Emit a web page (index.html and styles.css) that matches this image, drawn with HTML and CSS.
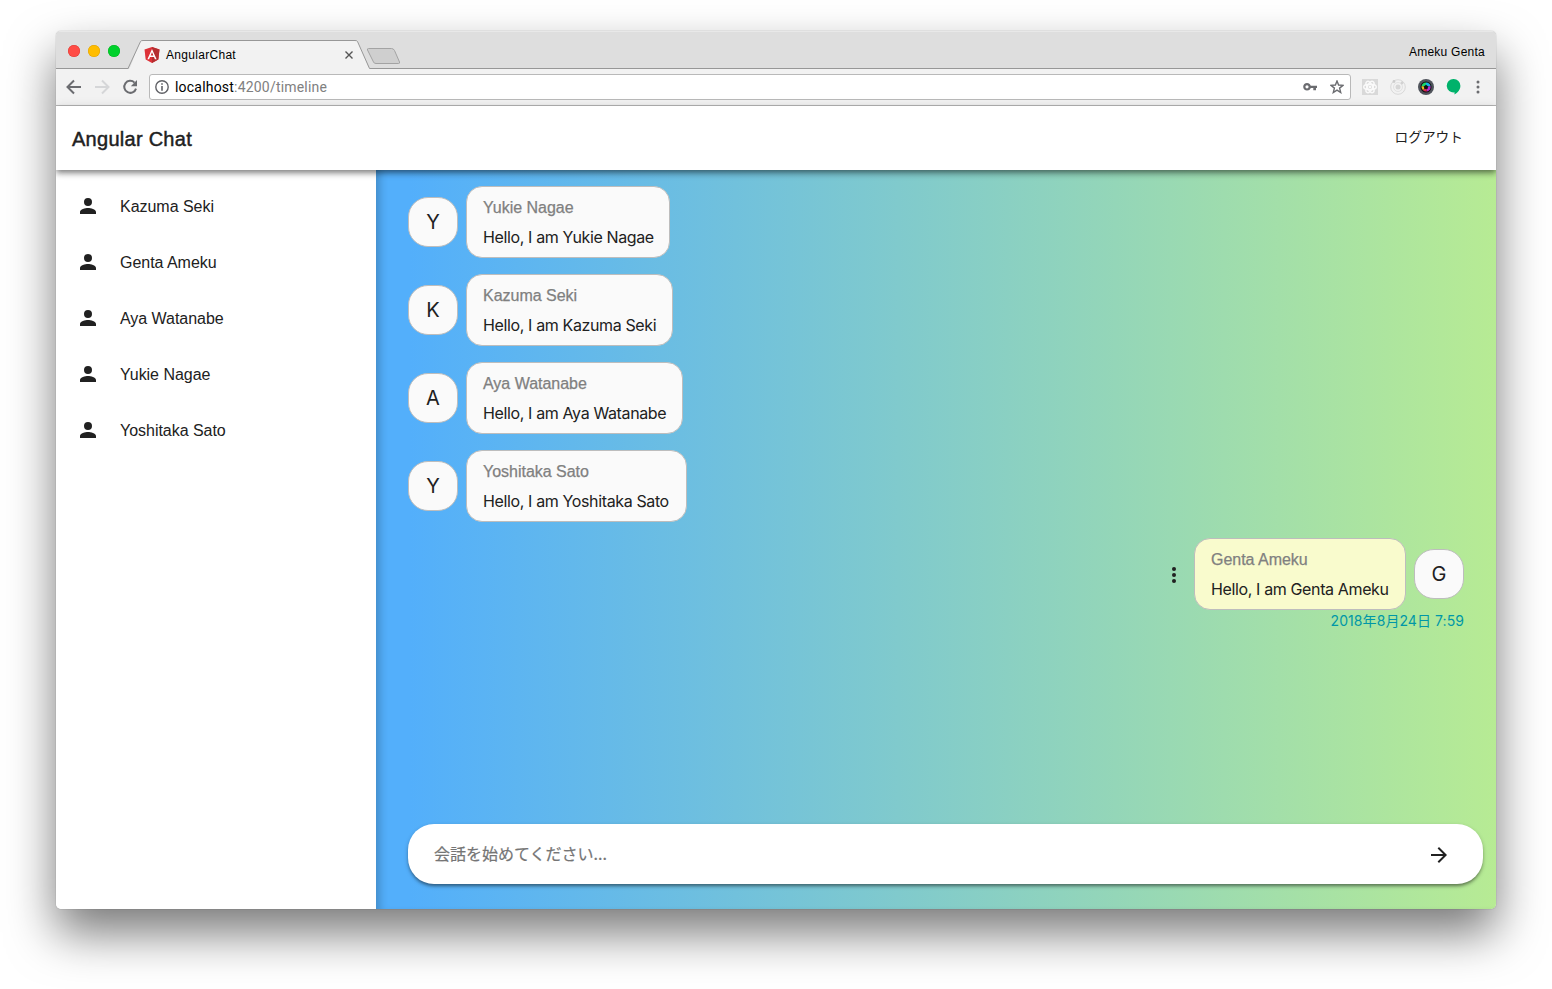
FILE: index.html
```html
<!DOCTYPE html>
<html lang="ja">
<head>
<meta charset="utf-8">
<title>AngularChat</title>
<link rel="stylesheet" href="styles.css">
</head>
<body>
<div class="window">
  <div class="tabstrip">
    <svg class="tabshape" width="360" height="38" viewBox="0 0 360 38">
      <path d="M72 38.5 L72 37.5 C74 37.5 74 36 75 34 L83.500 12 Q84.500 9.500 87 9.500 H299 Q301.500 9.500 302.500 12 L312 35 Q313 37.500 315 37.500 V38.500Z" fill="#f2f2f2"/>
      <path d="M0 37.500 H72 L84.500 10.500 Q85 9.500 87 9.500 H299 Q301 9.500 301.500 10.500 L313.500 37.500 H360" fill="none" stroke="#979797"/>
      <path d="M312.500 17.500 H335.500 Q337.500 17.500 338.500 19.500 L343.500 31 Q344 32.500 342.500 32.500 H320 Q318 32.500 317.500 31 L311.500 19 Q311 17.500 312.500 17.500Z" fill="#cfcfcf" stroke="#a3a3a3"/>
    </svg>
    <div class="lights"><i class="red"></i><i class="yellow"></i><i class="green"></i></div>
    <svg class="favicon" width="16" height="16" viewBox="0 0 16 16"><path d="M8 0 15.500 2.600 14.300 12.500 8 16 1.700 12.500.5 2.600Z" fill="#dd3138"/><path d="M8 0 15.500 2.600 14.300 12.500 8 16Z" fill="#b52e31"/><path d="M8 1.900 3.400 12.200H5.100L6 9.900H10L10.900 12.200H12.600ZM8 5.200 9.350 8.500H6.650Z" fill="#fff" fill-rule="evenodd"/></svg>
    <span class="tabtitle">AngularChat</span>
    <svg class="close" width="8" height="8" viewBox="0 0 8 8"><path d="M.5.5 7.500 7.500M7.500.5.5 7.500" stroke="#555" stroke-width="1.400"/></svg>
    <span class="profile">Ameku Genta</span>
  </div>
  <div class="toolbar">
    <svg class="nav" width="84" height="36" viewBox="0 0 84 36" fill="none" stroke-width="2">
      <path d="M25 18H12M18 11.500 11.500 18 18 24.500" stroke="#6b6c70"/>
      <path d="M39 18H52M46 11.500 52.500 18 46 24.500" stroke="#d5d6d8"/>
      <path d="M78.500 13.600A6 6 0 1 0 80 19.600" stroke="#6b6c70"/><path d="M81 11V17.200H74.800Z" fill="#6b6c70"/>
    </svg>
    <div class="address">
      <svg width="14" height="14" viewBox="0 0 14 14"><circle cx="7" cy="7" r="6.200" fill="none" stroke="#606166" stroke-width="1.400"/><path d="M6.200 3.200h1.600v1.600H6.200zM6.200 6h1.600v4.800H6.200z" fill="#606166"/></svg>
      <span class="url"><b>localhost</b>:4200/timeline</span>
      <svg class="key" width="15" height="10" viewBox="0 0 15 10"><circle cx="4" cy="4.800" r="2.700" fill="none" stroke="#6b6c70" stroke-width="2.200"/><path d="M7 3.700H14V6H13V8.200H10.300V6H7Z" fill="#6b6c70"/></svg>
      <svg class="star" width="14" height="14" viewBox="0 0 14 14"><path d="M7 1 8.600 5 13 5.300 9.600 8.100 10.700 12.500 7 10.100 3.300 12.500 4.400 8.100 1 5.300 5.400 5Z" fill="none" stroke="#6b6c70" stroke-width="1.400"/></svg>
    </div>
    <svg class="extensions" width="130" height="20" viewBox="0 0 130 20">
      <rect x="1" y="2" width="16" height="16" fill="#d9d9d9"/>
      <g fill="none" stroke="#fafafa" stroke-width="1.500"><ellipse cx="9" cy="10" rx="6.300" ry="2.700"/><ellipse cx="9" cy="10" rx="6.300" ry="2.700" transform="rotate(60 9 10)"/><ellipse cx="9" cy="10" rx="6.300" ry="2.700" transform="rotate(120 9 10)"/></g><circle cx="9" cy="10" r="1.400" fill="#fafafa"/>
      <g fill="none" stroke="#d9d9d9"><circle cx="37" cy="10" r="7.300"/><circle cx="37" cy="10" r="4.500" stroke="#e2e2e2"/></g><circle cx="37" cy="10" r="2.500" fill="#d6d6d6"/><circle cx="33" cy="4.500" r="1.400" fill="#ccc"/><circle cx="41" cy="6" r="1.400" fill="#d2d2d2"/>
      <circle cx="65" cy="10" r="8" fill="#50545c"/><circle cx="65" cy="10" r="5.500" fill="#111"/>
      <path d="M65 10 60.600 9A4.500 4.500 0 0 1 65 5.500Z" fill="#18d96b"/><path d="M65 10V5.500A4.500 4.500 0 0 1 69.500 9Z" fill="#13b5e6"/><path d="M65 10 69.500 9A4.500 4.500 0 0 1 66 14.500Z" fill="#b529cd"/><path d="M65 10 60.600 9A4.500 4.500 0 0 0 62 13.300Z" fill="#e7bd24"/><path d="M65 10 62 13.300A4.500 4.500 0 0 0 66 14.500Z" fill="#d9274f"/><path d="M62.800 9.500 65 7.800 67.200 9.500 66.500 12H63.500Z" fill="#111"/>
      <path d="M92.700 2A6.700 6.700 0 0 1 99.400 8.700C99.400 12.500 96.700 15.800 93.500 17.500V15.300A6.700 6.700 0 1 1 92.700 2Z" fill="#00b26b"/>
      <g fill="#6b6c70"><circle cx="117" cy="5" r="1.500"/><circle cx="117" cy="10" r="1.500"/><circle cx="117" cy="15" r="1.500"/></g>
    </svg>
  </div>
  <header class="appbar"><h1>Angular Chat</h1><span class="logout">ログアウト</span></header>
  <div class="main">
    <aside class="members">
      <div class="member"><svg width="24" height="24" viewBox="0 0 24 24"><path d="M12 12a4 4 0 1 0 0-8 4 4 0 0 0 0 8zm0 2c-2.670 0-8 1.340-8 4v2h16v-2c0-2.660-5.330-4-8-4z"/></svg><span>Kazuma Seki</span></div>
      <div class="member"><svg width="24" height="24" viewBox="0 0 24 24"><path d="M12 12a4 4 0 1 0 0-8 4 4 0 0 0 0 8zm0 2c-2.670 0-8 1.340-8 4v2h16v-2c0-2.660-5.330-4-8-4z"/></svg><span>Genta Ameku</span></div>
      <div class="member"><svg width="24" height="24" viewBox="0 0 24 24"><path d="M12 12a4 4 0 1 0 0-8 4 4 0 0 0 0 8zm0 2c-2.670 0-8 1.340-8 4v2h16v-2c0-2.660-5.330-4-8-4z"/></svg><span>Aya Watanabe</span></div>
      <div class="member"><svg width="24" height="24" viewBox="0 0 24 24"><path d="M12 12a4 4 0 1 0 0-8 4 4 0 0 0 0 8zm0 2c-2.670 0-8 1.340-8 4v2h16v-2c0-2.660-5.330-4-8-4z"/></svg><span>Yukie Nagae</span></div>
      <div class="member"><svg width="24" height="24" viewBox="0 0 24 24"><path d="M12 12a4 4 0 1 0 0-8 4 4 0 0 0 0 8zm0 2c-2.670 0-8 1.340-8 4v2h16v-2c0-2.660-5.330-4-8-4z"/></svg><span>Yoshitaka Sato</span></div>
    </aside>
    <section class="timeline">
      <div class="message"><div class="avatar">Y</div><div class="bubble w-nagae"><p class="name">Yukie Nagae</p><p class="text">Hello, I am Yukie Nagae</p></div></div>
      <div class="message"><div class="avatar">K</div><div class="bubble w-seki"><p class="name">Kazuma Seki</p><p class="text">Hello, I am Kazuma Seki</p></div></div>
      <div class="message"><div class="avatar">A</div><div class="bubble w-watanabe"><p class="name">Aya Watanabe</p><p class="text">Hello, I am Aya Watanabe</p></div></div>
      <div class="message"><div class="avatar">Y</div><div class="bubble w-sato"><p class="name">Yoshitaka Sato</p><p class="text">Hello, I am Yoshitaka Sato</p></div></div>
      <div class="message own">
        <svg class="more" width="24" height="24" viewBox="0 0 24 24"><circle cx="12" cy="6" r="2"/><circle cx="12" cy="12" r="2"/><circle cx="12" cy="18" r="2"/></svg>
        <div class="bubble w-ameku"><p class="name">Genta Ameku</p><p class="text">Hello, I am Genta Ameku</p></div><div class="avatar">G</div>
      </div>
      <div class="date">2018年8月24日 7:59</div>
      <div class="composer"><span>会話を始めてください...</span><svg width="24" height="24" viewBox="0 0 24 24"><path d="M12 4 10.590 5.410 16.170 11H4v2h12.170l-5.580 5.590L12 20l8-8z"/></svg></div>
    </section>
  </div>
</div>
</body>
</html>
```
FILE: styles.css
```css
* { box-sizing: border-box; }
html, body { height: 100%; overflow: hidden; }
body { margin: 0; padding: 31px 56px 0; background: #fff; font-family: "Liberation Sans", "Noto Sans CJK JP", sans-serif; color: #212121; }
p, h1 { margin: 0; }
svg { flex: none; display: block; }
span, p, h1 { white-space: nowrap; }
.window { width: 1440px; height: 878px; display: flex; flex-direction: column; overflow: hidden; border-radius: 5px; box-shadow: 0 0 1px rgba(0,0,0,.5), 0 24px 48px rgba(0,0,0,.53); }
.tabstrip { position: relative; flex: none; height: 38px; display: flex; align-items: center; background: #dedede; border-bottom: 1px solid #979797; color: #000; font-size: 12px; box-shadow: inset 0 1px #e8e8e8; }
.tabshape { position: absolute; left: 0; top: 0; }
.lights { display: flex; gap: 8px; padding-left: 12px; margin-top: 3px; }
.lights i { width: 12px; height: 12px; border-radius: 50%; }
.red { background: #ff4c46; box-shadow: inset 0 0 0 .5px #dd3b35; }
.yellow { background: #ffbd00; box-shadow: inset 0 0 0 .5px #dfa000; }
.green { background: #00d12c; box-shadow: inset 0 0 0 .5px #00b41f; }
.favicon { position: relative; margin: 10px 0 0 24px; }
.tabtitle { position: relative; margin: 10px 0 0 6px; width: 179px; letter-spacing: .3px; }
.close { position: relative; margin-top: 11px; }
.profile { margin: 4px 11px 0 auto; letter-spacing: .25px; }
.toolbar { flex: none; height: 37px; display: flex; align-items: center; background: #f2f2f2; border-bottom: 1px solid #b6b6b6; }
.nav { margin-right: 9px; }
.address { width: 1202px; height: 26px; display: flex; align-items: center; background: #fff; border: 1px solid #b9b9b9; border-radius: 3px; padding: 0 6px 0 5px; }
.url { margin-left: 6px; font: 14px Roboto, sans-serif; color: #808080; letter-spacing: .2px; }
.url b { font-weight: 400; color: #000; }
.key { margin-left: auto; }
.star { margin-left: 12px; }
.extensions { margin-left: 10px; }
.appbar { position: relative; z-index: 2; flex: none; height: 64px; display: flex; align-items: center; justify-content: space-between; padding: 0 33px 0 16px; background: #fff; box-shadow: 0 3px 5px -1px rgba(0,0,0,.3), 0 4px 6px rgba(0,0,0,.2), 0 1px 10px rgba(0,0,0,.12); }
h1 { font-size: 20px; font-weight: 400; letter-spacing: .27px; -webkit-text-stroke: .45px #212121; padding-top: 2px; }
.logout { font-size: 13.7px; font-family: "Noto Sans CJK JP", sans-serif; padding-bottom: 4px; }
.main { flex: 1; display: flex; min-height: 0; }
.members { width: 320px; background: #fff; padding-top: 8px; }
.member { height: 56px; display: flex; align-items: center; gap: 20px; padding-left: 20px; font-size: 16px; letter-spacing: -.03px; }
.member span { padding-top: 2px; }
.member svg, .more, .composer svg { fill: #212121; }
.timeline { flex: 1; display: flex; flex-direction: column; padding: 16px 13px 25px 32px; background: linear-gradient(90deg, #53affb 0, #53affb 3%, #b7eb94 100%); box-shadow: inset 9px 0 8px -5px rgba(0,0,0,.2); }
.message { height: 72px; margin-bottom: 16px; display: flex; align-items: center; gap: 8px; }
.avatar { width: 50px; height: 50px; display: flex; align-items: center; justify-content: center; background: #fafafa; border: 1px solid #bdbdbd; border-radius: 20px; font: 20px Inter, sans-serif; }
.bubble { height: 72px; background: #fafafa; border: 1px solid #bdbdbd; border-radius: 16px; padding: 6px 16px; line-height: 30px; }
.name { color: #808080; font-size: 16px; letter-spacing: -.02px; -webkit-text-stroke: .25px #808080; }
.text { font-family: Inter, sans-serif; font-size: 16px; line-height: 28px; letter-spacing: -.37px; }
.w-nagae { width: 204px; }
.w-seki { width: 207px; }
.w-watanabe { width: 217px; }
.w-sato { width: 221px; }
.w-ameku { width: 212px; background: #f9fbcd; }
.own { justify-content: flex-end; margin: 0 19px 0 0; }
.more { margin-top: 2px; }
.date { align-self: flex-end; margin-right: 19px; font: 14px/22px Inter, "Noto Sans CJK JP", sans-serif; letter-spacing: .07px; color: #0097a7; }
.composer { margin-top: auto; width: 1075px; height: 60px; display: flex; align-items: center; justify-content: space-between; padding: 0 32px 0 26px; background: #fff; border-radius: 26px; box-shadow: 0 3px 3px -1px rgba(0,0,0,.3), 0 2px 4px rgba(0,0,0,.25); font: 16px "Noto Sans CJK JP", sans-serif; color: #757575; }
.composer span { padding-bottom: 2px; -webkit-text-stroke: .2px #757575; }
.composer svg { margin-top: 2px; }
```
